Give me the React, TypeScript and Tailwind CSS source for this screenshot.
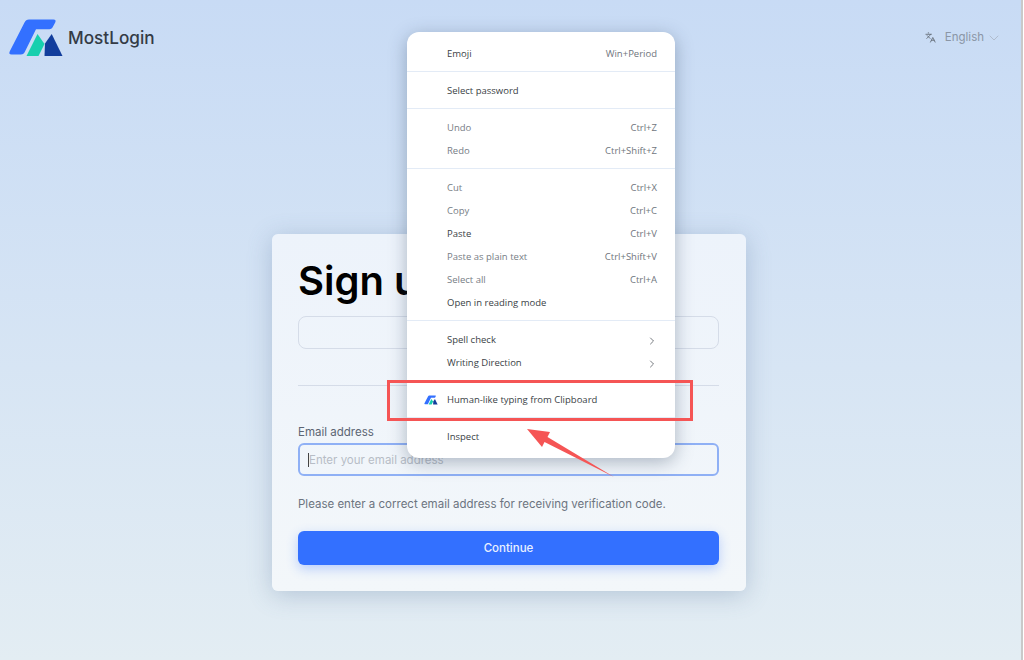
import { ChevronDown, ChevronRight, Languages } from "lucide-react";

type Item = { label: string; keys?: string; muted?: boolean; arrow?: boolean; icon?: boolean };

const groups: Item[][] = [
  [{ label: "Emoji", keys: "Win+Period" }],
  [{ label: "Select password" }],
  [
    { label: "Undo", keys: "Ctrl+Z", muted: true },
    { label: "Redo", keys: "Ctrl+Shift+Z", muted: true },
  ],
  [
    { label: "Cut", keys: "Ctrl+X", muted: true },
    { label: "Copy", keys: "Ctrl+C", muted: true },
    { label: "Paste", keys: "Ctrl+V" },
    { label: "Paste as plain text", keys: "Ctrl+Shift+V", muted: true },
    { label: "Select all", keys: "Ctrl+A", muted: true },
    { label: "Open in reading mode" },
  ],
  [
    { label: "Spell check", arrow: true },
    { label: "Writing Direction", arrow: true },
  ],
  [{ label: "Human-like typing from Clipboard", icon: true }],
  [{ label: "Inspect" }],
];

function Logo({ className }: { className: string }) {
  return (
    <svg viewBox="8 17 56 40" className={className}>
      <path
        d="M29 18.5H53.5Q56.5 18.5 55.2 21.5L52.5 26.5Q51.5 28.3 49.5 28.3H36L24.5 51.5Q23.5 53.5 21 53.5H11.5Q8.3 53.5 9.8 50.3L24.5 21.5Q25.8 18.5 29 18.5Z"
        fill="#3370ff"
      />
      <path d="M26.5 55L37.5 33L44.5 43L38.5 55Z" fill="#17cfae" />
      <path d="M45 42.5L51.7 33L62.5 55H44.5Z" fill="#123d9c" />
    </svg>
  );
}

function ContextMenu() {
  return (
    <div className="absolute left-[407px] top-[32px] w-[268px] rounded-xl bg-white pt-[3px] pb-[3px] font-['Open_Sans',sans-serif] text-[9.5px] shadow-[0_4px_18px_rgba(40,60,90,0.35)]">
      {groups.map((group, i) => (
        <div
          key={i}
          className={
            i < groups.length - 1
              ? "border-b border-[#e3ebf6] pt-[7px] pb-[6px]"
              : "pt-[7px] pb-[7px]"
          }
        >
          {group.map((item) => (
            <div key={item.label} className="relative flex h-[23px] items-center justify-between pt-[2px] pr-[18px] pl-[40px]">
              {item.icon && <Logo className="absolute left-[17px] top-[7px] h-[10px] w-[14px]" />}
              <span className={item.muted ? "text-[#777d85]" : "text-[#3a3f46]"}>{item.label}</span>
              {item.keys && <span className="text-[#6f757d]">{item.keys}</span>}
              {item.arrow && <ChevronRight className="-mr-[1px] h-3 w-3 text-[#4a4f56]" strokeWidth={1.5} />}
            </div>
          ))}
        </div>
      ))}
    </div>
  );
}

function Annotation() {
  return (
    <>
      <div className="absolute left-[387px] top-[380px] h-[41px] w-[306px] border-[3px] border-[#f55555]" />
      <svg className="absolute left-0 top-0 h-[660px] w-[1024px]" viewBox="0 0 1024 660">
        <path d="M527 429L550 432L547.5 437L614 477L544.5 442L542 447Z" fill="#f55555" />
      </svg>
    </>
  );
}

export default function App() {
  return (
    <div className="relative flex h-[660px] w-[1024px] overflow-hidden bg-white font-['Inter',sans-serif]">
      <div className="h-full flex-1 bg-gradient-to-b from-[#c8dbf5] to-[#e3edf3]">
        <header className="flex h-[75px] items-center justify-between pr-[19px] pl-[8px]">
          <div className="flex items-center gap-[4px]">
            <Logo className="h-[40px] w-[56px]" />
            <span className="text-[17.2px] font-medium text-[#343b46]">MostLogin</span>
          </div>
          <div className="flex items-center text-[#8b96a6]">
            <Languages className="h-[11px] w-[11px] text-[#666e7a]" />
            <span className="ml-[9px] text-[11.5px]">English</span>
            <ChevronDown className="ml-[2px] h-[16px] w-[16px] text-[#a9b4c4]" strokeWidth={1.2} />
          </div>
        </header>

        <main className="flex justify-center pt-[159px] pr-[3px]">
          <div className="h-[357px] w-[474px] rounded-md bg-gradient-to-b from-[#edf3fb] to-[#f3f7fa] pr-[27px] pl-[26px] shadow-[0_4px_24px_rgba(80,110,150,0.3)]">
            <h1 className="mt-[23px] h-[48px] text-[40px] leading-[48px] font-semibold text-black">Sign up</h1>
            <div className="mt-[11px] h-[33px] rounded-lg border border-[#d5dce8]" />
            <div className="mt-[36px] border-t border-[#d5dce8]" />
            <label className="mt-[38px] block text-[11.5px] leading-[16px] text-[#5c6573]">Email address</label>
            <div className="mt-[3px] flex h-[33px] items-center rounded-md border-2 border-[#8fb0f5] pl-[8px]">
              <span className="h-[14px] w-px bg-[#444]" />
              <span className="pt-[2px] text-[11.5px] text-[#b7bdc6]">Enter your email address</span>
            </div>
            <p className="mt-[20px] text-[11.5px] leading-[16px] text-[#6c7480]">
              Please enter a correct email address for receiving verification code.
            </p>
            <button className="mt-[19px] h-[34px] w-full rounded-md bg-[#3370ff] pt-[2px] text-[11.5px] font-medium text-[#eaf0ff] shadow-[0_4px_12px_rgba(51,112,255,0.3)]">
              Continue
            </button>
          </div>
        </main>
      </div>
      <div className="h-full w-[3px] border-l-2 border-[#c9c9c9] bg-white" />

      <ContextMenu />
      <Annotation />
    </div>
  );
}
